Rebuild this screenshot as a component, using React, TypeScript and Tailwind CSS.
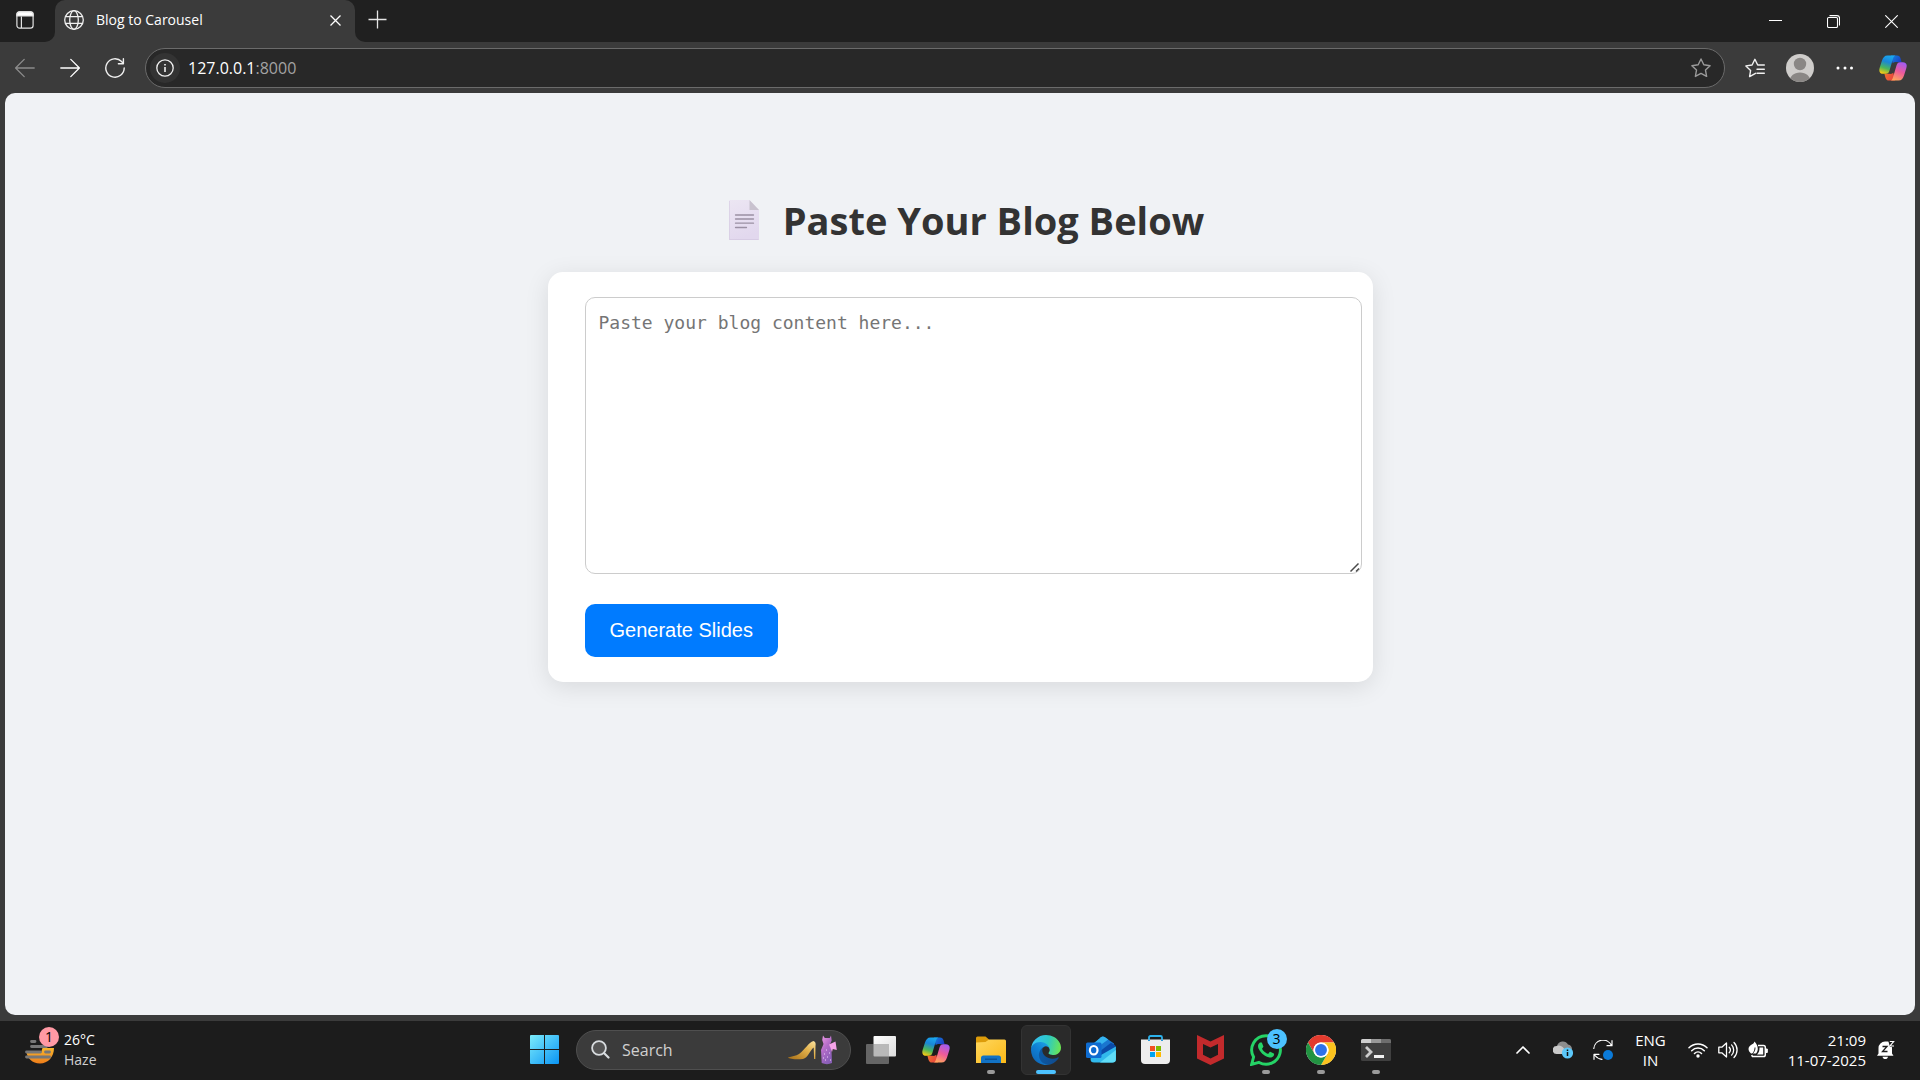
import React, { useState } from 'react';

const uiFont = "font-['Open_Sans','Noto_Sans',sans-serif]";

type IconProps = { className?: string };

/* ---------- Browser icons ---------- */

const TabActionsIcon = ({ className }: IconProps) => (
  <svg viewBox="0 0 20 20" className={className} fill="none" stroke="#e6e6e6" strokeWidth="1.3">
    <rect x="1" y="1" width="18" height="18" rx="3" />
    <path d="M1 5.500V4c0-1.700 1.300-3 3-3h12c1.700 0 3 1.300 3 3v1.500z" fill="#fff" />
    <path d="M6 6v13" />
  </svg>
);

const GlobeIcon = ({ className }: IconProps) => (
  <svg viewBox="0 0 20 20" className={className} fill="none" stroke="#f0f0f0" strokeWidth="1.3">
    <circle cx="10" cy="10" r="9.3" />
    <ellipse cx="10" cy="10" rx="4.3" ry="9.3" />
    <path d="M1.5 6.6h17M1.5 13.4h17" />
  </svg>
);

const ArrowIcon = ({ className }: IconProps) => (
  <svg viewBox="0 0 20 20" className={className} fill="none" stroke="currentColor" strokeWidth="1.3" strokeLinecap="round" strokeLinejoin="round">
    <path d="M.8 10h18.600M10.800 1.400l8.600 8.600-8.600 8.600" />
  </svg>
);

const ReloadIcon = ({ className }: IconProps) => (
  <svg viewBox="0 0 20 20" className={className} fill="none" stroke="#f0f0f0" strokeWidth="1.4" strokeLinecap="round" strokeLinejoin="round">
    <path d="M19.2 10A9.2 9.2 0 1 1 16.6 3.6L18.2 5.4M18.4.8v5h-5" />
  </svg>
);

const StarIcon = ({ className }: IconProps) => (
  <svg viewBox="0 0 20 20" className={className} fill="none" stroke="#9a9a9a" strokeWidth="1.4" strokeLinejoin="round">
    <path d="M10 1l2.8 5.8 6.3.9-4.6 4.4 1.1 6.3L10 15.4l-5.6 3 1.1-6.3L.9 7.700l6.300-.9z" />
  </svg>
);

const FavoritesIcon = ({ className }: IconProps) => (
  <svg viewBox="0 0 20 20" className={className} fill="none" stroke="#f0f0f0" strokeWidth="1.4" strokeLinecap="round" strokeLinejoin="round">
    <path d="M10.500 15.300L4.600 18.600l1-6.200L.9 7.900l6.200-.9L9.900 1.300 12.700 7h6.600M12 11.300h7.300M12 15.300h7.300" />
  </svg>
);

const ProfileIcon = ({ className }: IconProps) => (
  <svg viewBox="0 0 28 28" className={className}>
    <defs>
      <clipPath id="avatar">
        <circle cx="14" cy="14" r="14" />
      </clipPath>
    </defs>
    <g clipPath="url(#avatar)">
      <rect width="28" height="28" fill="#cfcdcb" />
      <circle cx="14" cy="10" r="6.200" fill="#8a8785" />
      <path d="M3.500 28c0-6 4.500-9.600 10.500-9.600S24.500 22 24.500 28z" fill="#8a8785" />
    </g>
  </svg>
);

const CopilotIcon = ({ className, id }: IconProps & { id: string }) => (
  <svg viewBox="0 0 28 26" className={className}>
    <defs>
      <linearGradient id={`${id}-l`} x1="0.6" y1="0" x2="0.3" y2="1">
        <stop offset="0" stopColor="#1aa7ee" />
        <stop offset="0.35" stopColor="#1a86d8" />
        <stop offset="0.7" stopColor="#4cb75a" />
        <stop offset="1" stopColor="#f6c915" />
      </linearGradient>
      <linearGradient id={`${id}-r`} x1="0.7" y1="0" x2="0.3" y2="1">
        <stop offset="0" stopColor="#a25bf2" />
        <stop offset="0.5" stopColor="#ee5a9a" />
        <stop offset="1" stopColor="#ffa65c" />
      </linearGradient>
      <linearGradient id={`${id}-t`} x1="0" y1="0" x2="1" y2="0.6">
        <stop offset="0" stopColor="#1488e0" />
        <stop offset="1" stopColor="#1b3fc4" />
      </linearGradient>
      <linearGradient id={`${id}-b`} x1="0" y1="0" x2="1" y2="0.3">
        <stop offset="0" stopColor="#f0722c" />
        <stop offset="1" stopColor="#e8443f" />
      </linearGradient>
    </defs>
    <path d="M12 .5h6c2 0 3 1.200 3.600 3.100l1 3.600h-3.400c-2.500 0-3.500-.5-5.500 1z" fill={`url(#${id}-t)`} />
    <path d="M16 25.500h-6c-2 0-3-1.200-3.600-3.100l-1-3.600h3.400c2.500 0 3.500.5 5.500-1z" fill={`url(#${id}-b)`} />
    <path d="M16.500.5h-8C5.500.5 4 2.600 3 5.600L.7 12.800c-1.200 3.700.3 6 3.600 6h2.400c2.200 0 3.200-1.200 3.800-3.300L13.800 4.300C14.400 2 15.200.8 16.500.5z" fill={`url(#${id}-l)`} />
    <path d="M11.500 25.500h8c3 0 4.500-2.100 5.500-5.100l2.300-7.200c1.200-3.700-.3-6-3.600-6h-2.400c-2.200 0-3.200 1.200-3.800 3.300L14.200 21.700c-.6 2.300-1.400 3.500-2.700 3.800z" fill={`url(#${id}-r)`} />
  </svg>
);

/* ---------- Page icon ---------- */

const PageEmoji = ({ className }: IconProps) => (
  <svg viewBox="0 0 30 40" className={className}>
    <defs>
      <linearGradient id="sheet" x1="0" y1="0" x2="0.3" y2="1">
        <stop offset="0" stopColor="#ece6f3" />
        <stop offset="1" stopColor="#e2d8ee" />
      </linearGradient>
    </defs>
    <path d="M1 0h19.500L30 10v29a1 1 0 0 1-1 1H1a1 1 0 0 1-1-1V1a1 1 0 0 1 1-1z" fill="url(#sheet)" />
    <path d="M.3 1v38.500h29.400" fill="none" stroke="#d3c7e0" strokeWidth="0.7" />
    <path d="M20.500 0L30 10h-9.500z" fill="#c8c2ce" />
    <path d="M6.500 15h18M6.500 19h18M6.500 23.200h18M6.500 27.500h11" stroke="#9a90a3" strokeWidth="1.300" strokeLinecap="round" />
  </svg>
);

/* ---------- Taskbar icons ---------- */

const WeatherIcon = ({ className }: IconProps) => (
  <svg viewBox="0 0 30 25" className={className}>
    <defs>
      <linearGradient id="sun" x1="0" y1="0" x2="0" y2="1">
        <stop offset="0" stopColor="#f8b62d" />
        <stop offset="1" stopColor="#ee7d1a" />
      </linearGradient>
    </defs>
    <path d="M1.500 13.500H16L17.500 9H29c0 9-6 15.500-14 15.500S2.500 19 1.500 13.500z" fill="url(#sun)" />
    <path d="M6.500 2.500h3.500M6.500 7.500h15M1.500 13h14M20.500 13h4M1.500 18h23" stroke="#777" strokeWidth="2.800" strokeLinecap="round" />
  </svg>
);

const StartIcon = ({ className }: IconProps) => (
  <svg viewBox="0 0 29 29" className={className}>
    <defs>
      <linearGradient id="win" gradientUnits="userSpaceOnUse" x1="0" y1="0" x2="29" y2="29">
        <stop offset="0" stopColor="#7cecfb" />
        <stop offset="1" stopColor="#0a94f4" />
      </linearGradient>
    </defs>
    <path d="M0 1a1 1 0 0 1 1-1h13v14H0zM15 0h13a1 1 0 0 1 1 1v13H15zM0 15h14v14H1a1 1 0 0 1-1-1zM15 15h14v13a1 1 0 0 1-1 1H15z" fill="url(#win)" />
  </svg>
);

const SearchIcon = ({ className }: IconProps) => (
  <svg viewBox="0 0 19 19" className={className} fill="none" stroke="#d8dcdf" strokeLinecap="round">
    <circle cx="8" cy="8" r="6.900" strokeWidth="1.800" fill="#555" />
    <path d="M13.200 13.200l4.300 4.300" strokeWidth="2.200" />
  </svg>
);

const ShoesAndDressArt = ({ className }: IconProps) => (
  <svg viewBox="0 0 50 30" className={className}>
    <defs>
      <linearGradient id="heel" x1="0" y1="1" x2="1" y2="0">
        <stop offset="0" stopColor="#a86f16" />
        <stop offset="0.6" stopColor="#e3b24c" />
        <stop offset="1" stopColor="#fae3a0" />
      </linearGradient>
      <linearGradient id="dress" x1="0" y1="0" x2="0.5" y2="1">
        <stop offset="0" stopColor="#ef9be4" />
        <stop offset="0.5" stopColor="#b36cc8" />
        <stop offset="1" stopColor="#8a5fb8" />
      </linearGradient>
    </defs>
    <path d="M0 22.500c4-1.500 8-1.300 11-3.500C17 14.500 20.500 7.500 25.500 6c2 .7 2.500 2.500 2 5l-.2 13h-1.200l-.4-11.500c-4 3-5.700 10.500-10.700 11.500-5 .7-14 .2-15-1.500z" fill="url(#heel)" />
    <path d="M35 .5l1.800 2.500h5L43 .5l.7 5-1.700 4 1.500 5.500.5 13c-3 1.500-7 1.500-10.300 0L33 15l2.500-6-1.300-4z" fill="url(#dress)" />
    <path d="M36 19h1M39 22h1M37 25h1M41 18h1M42 25h1M38 15h1M35 23h1" stroke="#f1d5fa" strokeWidth="1" />
    <path d="M41 9.500l6.500-3 1.300 8.500-4-1-.8 3-1.500-4z" fill="#f6a3e8" />
  </svg>
);

const TaskViewIcon = ({ className }: IconProps) => (
  <svg viewBox="0 0 30 28" className={className}>
    <defs>
      <linearGradient id="pane" x1="0" y1="0" x2="1" y2="1">
        <stop offset="0" stopColor="#fff" />
        <stop offset="1" stopColor="#dcdcdc" />
      </linearGradient>
    </defs>
    <rect x="7.500" y="0" width="22.500" height="20.500" rx="1" fill="url(#pane)" />
    <rect x="0" y="8" width="23" height="20" rx="1" fill="#656565" />
    <path d="M7.500 8H23v12.500H8.500a1 1 0 0 1-1-1z" fill="#b9b9b9" />
  </svg>
);

const FolderIcon = ({ className }: IconProps) => (
  <svg viewBox="0 0 30 27" className={className}>
    <defs>
      <linearGradient id="folder" x1="0" y1="0" x2="1" y2="1">
        <stop offset="0" stopColor="#ffd75e" />
        <stop offset="1" stopColor="#fbb917" />
      </linearGradient>
    </defs>
    <path d="M0 2a1.500 1.500 0 0 1 1.500-1.500h8L13 3.500V9H0z" fill="#dd9c0a" />
    <path d="M0 6.500L9.500 6l3.500-2.500h15.500A1.500 1.500 0 0 1 30 5v22H0z" fill="url(#folder)" />
    <path d="M5 27v-5a2.500 2.500 0 0 1 2.500-2.500h15A2.500 2.500 0 0 1 25 22v5z" fill="#1272c4" />
    <path d="M9 23.200h12" stroke="#0b4b8e" strokeWidth="1.200" />
  </svg>
);

const EdgeIcon = ({ className }: IconProps) => (
  <svg viewBox="0 0 256 256" className={className}>
    <defs>
      <linearGradient id="edge-a" gradientUnits="userSpaceOnUse" x1="63" y1="178" x2="241" y2="178">
        <stop offset="0" stopColor="#0c59a4" />
        <stop offset="1" stopColor="#114a8b" />
      </linearGradient>
      <linearGradient id="edge-b" gradientUnits="userSpaceOnUse" x1="157" y1="100" x2="46" y2="222">
        <stop offset="0" stopColor="#1b9de2" />
        <stop offset="0.5" stopColor="#0f7fd4" />
        <stop offset="1" stopColor="#0f6cbd" />
      </linearGradient>
      <linearGradient id="edge-c" gradientUnits="userSpaceOnUse" x1="20" y1="70" x2="250" y2="120">
        <stop offset="0" stopColor="#35c1f1" />
        <stop offset="0.5" stopColor="#2cc9c6" />
        <stop offset="1" stopColor="#6be553" />
      </linearGradient>
    </defs>
    <path d="M231 190.500c-3.400 1.800-6.900 3.400-10.500 4.700a101.900 101.900 0 0 1-35.900 6.500c-47.300 0-88.500-32.500-88.500-74.300a31.500 31.500 0 0 1 16.400-27.300c-42.800 1.800-53.800 46.400-53.800 72.500 0 73.900 68.100 81.400 82.800 81.400 7.900 0 19.800-2.300 27-4.600l1.300-.4a128.300 128.300 0 0 0 66.600-52.800 4 4 0 0 0-5.400-5.700z" fill="url(#edge-a)" />
    <path d="M105.700 241.400A79.200 79.200 0 0 1 83 220.100a80.700 80.700 0 0 1 29.500-120c3.200-1.500 8.500-4.100 15.600-4a32.400 32.400 0 0 1 25.700 13 31.900 31.900 0 0 1 6.300 18.700c0-.2 24.500-79.600-80-79.600C36.200 48.200 0 89.900 0 126.400a130.300 130.300 0 0 0 12.100 56.100 128 128 0 0 0 156.400 67.100 75.500 75.500 0 0 1-62.800-8.200z" fill="url(#edge-b)" />
    <path d="M152.300 148.900c-.8 1-3.300 2.500-3.300 5.700 0 2.600 1.700 5.200 4.700 7.300 14.400 10 41.500 8.700 41.600 8.700a59.600 59.600 0 0 0 30.300-8.300 61.400 61.400 0 0 0 30.400-52.900c.3-22.400-8-37.300-11.300-43.900C223.500 23.900 177.700 0 128 0A128 128 0 0 0 0 126.200c.5-36.500 36.800-66 80-66 3.500 0 23.500.3 42 10a72.600 72.600 0 0 1 30.900 29.300c6.100 10.600 7.200 24.100 7.200 29.500s-2.700 13.300-7.800 19.900z" fill="url(#edge-c)" />
  </svg>
);

const OutlookIcon = ({ className }: IconProps) => (
  <svg viewBox="0 0 30 27" className={className}>
    <path d="M4.500 10L15 1.200a3 3 0 0 1 3.600-.2L28 7.500V20L12 21z" fill="#1a76cf" />
    <path d="M7 8l8-6.800a3 3 0 0 1 3.600-.2l3.600 2.600-11 8z" fill="#35b4ef" />
    <path d="M11 17.500l14-10.700 3.200 1.700c1 .6 1.600 1.500 1.700 3L16 20z" fill="#0b4ba8" />
    <path d="M5 20l10-1 14.900-8.500V23a3.500 3.500 0 0 1-3.500 3.500H8A3.500 3.500 0 0 1 4.500 23z" fill="#31b9ec" />
    <path d="M14 26.500L29.900 14V23a3.500 3.500 0 0 1-3.500 3.500z" fill="#5fdcf7" />
    <rect x="0" y="6.500" width="15.500" height="15.500" rx="1.500" fill="#0f6cd0" />
    <ellipse cx="7.700" cy="14.200" rx="3.800" ry="4.200" fill="none" stroke="#fff" strokeWidth="2.200" />
  </svg>
);

const StoreIcon = ({ className }: IconProps) => (
  <svg viewBox="0 0 29 29" className={className}>
    <path d="M8 6.500V2.500A1.500 1.500 0 0 1 9.500 1h10A1.500 1.500 0 0 1 21 2.500v4" fill="none" stroke="#2cb2ec" strokeWidth="1.800" />
    <path d="M0 4.500h29V25a4 4 0 0 1-4 4H4a4 4 0 0 1-4-4z" fill="#ededed" />
    <path d="M8 6V4.500M21 6V4.500" stroke="#1690d6" strokeWidth="1.800" />
    <path d="M9 11h5v5H9z" fill="#f25022" />
    <path d="M15 11h5v5h-5z" fill="#7fba00" />
    <path d="M9 17h5v5H9z" fill="#00a4ef" />
    <path d="M15 17h5v5h-5z" fill="#ffb900" />
  </svg>
);

const McAfeeIcon = ({ className }: IconProps) => (
  <svg viewBox="0 0 27 30" className={className}>
    <path d="M0 0l13.500 6.500L27 0v23.500L13.500 30 0 23.500zM6 9v10.800l7.500 3.600 7.500-3.600V9l-7.500 3.500z" fill="#c22a2c" fillRule="evenodd" />
  </svg>
);

const WhatsAppIcon = ({ className }: IconProps) => (
  <svg viewBox="0 0 24 24" className={className} fill="#25d366">
    <path d="M17.472 14.382c-.297-.149-1.758-.867-2.030-.967-.273-.099-.471-.148-.670.150-.197.297-.767.966-.940 1.164-.173.199-.347.223-.644.075-.297-.150-1.255-.463-2.390-1.475-.883-.788-1.480-1.761-1.653-2.059-.173-.297-.018-.458.130-.606.134-.133.298-.347.446-.520.149-.174.198-.298.298-.497.099-.198.050-.371-.025-.520-.075-.149-.669-1.612-.916-2.207-.242-.579-.487-.500-.669-.510-.173-.008-.371-.010-.570-.010-.198 0-.520.074-.792.372-.272.297-1.040 1.016-1.040 2.479 0 1.462 1.065 2.875 1.213 3.074.149.198 2.096 3.200 5.077 4.487.709.306 1.262.489 1.694.625.712.227 1.360.195 1.871.118.571-.085 1.758-.719 2.006-1.413.248-.694.248-1.289.173-1.413-.074-.124-.272-.198-.570-.347" />
    <path d="M12 1.300A10.700 10.700 0 0 0 2.700 17.300L1.200 22.800l5.600-1.500A10.700 10.700 0 1 0 12 1.300z" fill="none" stroke="#25d366" strokeWidth="2.200" />
  </svg>
);

const ChromeIcon = ({ className }: IconProps) => (
  <svg viewBox="0 0 48 48" className={className}>
    <circle cx="24" cy="24" r="24" fill="#fff" />
    <path d="M3.200 12a24 24 0 0 1 41.600 0H24a12 12 0 0 0-10.400 18z" fill="#e33b2e" />
    <path d="M44.800 12A24 24 0 0 1 24 48l10.400-18A12 12 0 0 0 24 12z" fill="#fcc31e" />
    <path d="M24 48A24 24 0 0 1 3.200 12l10.400 18a12 12 0 0 0 20.800 0z" fill="#229342" />
    <circle cx="24" cy="24" r="12" fill="#fff" />
    <circle cx="24" cy="24" r="9.500" fill="#2f72ea" />
  </svg>
);

const TerminalIcon = ({ className }: IconProps) => (
  <svg viewBox="0 0 30 22" className={className}>
    <rect width="30" height="22" rx="1.500" fill="#404040" />
    <path d="M0 4V1.500A1.500 1.500 0 0 1 1.500 0H10v4z" fill="#cfcfcf" />
    <path d="M10 0h10v4H10z" fill="#999" />
    <path d="M20 0h8.500A1.500 1.500 0 0 1 30 1.500V4H20z" fill="#6e6e6e" />
    <path d="M5 8l5 5-5 5" fill="none" stroke="#ccc" strokeWidth="2.800" />
    <path d="M13 17.500h10" stroke="#f2f2f2" strokeWidth="3" />
  </svg>
);

const CloudIcon = ({ className }: IconProps) => (
  <svg viewBox="0 0 20 18" className={className}>
    <path d="M4 5a6 6 0 0 1 11-1.500A5 5 0 0 1 19 8l-4 5z" fill="#8d8d8d" />
    <path d="M4 13a4 4 0 0 1-.5-8C6 3.500 9 5 10.500 7L15 13z" fill="#c9c9c9" />
    <circle cx="14.500" cy="12" r="5.600" fill="#5cc8fa" />
    <path d="M14.500 11v4M14.500 8.600v1.300" stroke="#111" strokeWidth="1.500" />
  </svg>
);

const SyncIcon = ({ className }: IconProps) => (
  <svg viewBox="0 0 20 20" className={className} fill="none" stroke="#fff" strokeWidth="1.200" strokeLinecap="round" strokeLinejoin="round">
    <path d="M.8 8.500A9.300 9.300 0 0 1 18.500 5.500M19 .7v5h-5M1 19.300v-5h5M2 15.500c2 2.500 4 3.600 7 3.800" />
    <circle cx="15" cy="15" r="5" fill="#0b7ad8" stroke="none" />
  </svg>
);

const WifiIcon = ({ className }: IconProps) => (
  <svg viewBox="0 0 20 16" className={className} fill="none" stroke="#fff" strokeWidth="1.500" strokeLinecap="round">
    <path d="M1 5.800a12.600 12.600 0 0 1 18 0M3.700 8.700a8.800 8.800 0 0 1 12.600 0M6.500 11.500a5 5 0 0 1 7 0" />
    <circle cx="10" cy="14" r="1.700" fill="#fff" stroke="none" />
  </svg>
);

const SpeakerIcon = ({ className }: IconProps) => (
  <svg viewBox="0 0 20 18" className={className} fill="none" stroke="#fff" strokeWidth="1.300" strokeLinecap="round" strokeLinejoin="round">
    <path d="M.8 6.200h3L8.500 2v14l-4.700-4.200h-3zM11.200 6.300a4 4 0 0 1 0 5.400M13.600 3.900a7.300 7.300 0 0 1 0 10.200M16 1.500a10.700 10.700 0 0 1 0 15" />
  </svg>
);

const BatteryIcon = ({ className }: IconProps) => (
  <svg viewBox="0 0 20 18" className={className}>
    <path d="M10 4.500h5.500a1.800 1.800 0 0 1 1.800 1.800v7.400a1.800 1.800 0 0 1-1.800 1.800H4.500l-1-1.500" fill="none" stroke="#fff" strokeWidth="1.500" />
    <path d="M18 8h1.300v3.500H18z" fill="#fff" stroke="#fff" />
    <path d="M11.500 6.500h3.700v7H9c2-2 2.600-4 2.500-7z" fill="#fff" />
    <path d="M6.500.5c3.500 3.500 4.500 8.500 1.500 12H3C-1 9 .5 5.500 3 4c1.500-1 3-1.500 3.500-3.500z" fill="#fff" />
    <path d="M7 6.500c0 4-2 6-6 9.500" fill="none" stroke="#1c1c1c" strokeWidth="1" />
  </svg>
);

const BellIcon = ({ className }: IconProps) => (
  <svg viewBox="0 0 18 20" className={className}>
    <path d="M1.500 13.500V8A6.500 6.500 0 0 1 8 1.500h4l3 6v6l1.500 2.300H0zM5.500 16.800h5.500c-.3 1.500-1.300 2.300-2.700 2.300s-2.500-.8-2.800-2.300z" fill="#fff" />
    <path d="M5.500 6.500h4.500L5.500 11.500h5" fill="none" stroke="#1c1c1c" strokeWidth="1.300" />
    <path d="M11 0h7v7h-5z" fill="#1c1c1c" />
    <path d="M12.800 1.500h3.800L13 6h4" fill="none" stroke="#fff" strokeWidth="1.200" />
  </svg>
);

/* ---------- Layout ---------- */

const TabStrip = () => (
  <div className="flex h-[42px] text-[14px] text-white">
    <div className="flex w-[55px] items-center rounded-br-[10px] bg-[#202020] pb-[2px] pl-4">
      <button type="button" aria-label="Tab actions">
        <TabActionsIcon className="size-[18px]" />
      </button>
    </div>
    <div className="w-[300px] bg-[#202020]">
      <div className="flex h-full items-center rounded-t-[10px] bg-[#3b3b3b] pr-[14px] pb-[2px] pl-[9px]">
        <GlobeIcon className="mr-3 size-5" />
        <span className="flex-1 pb-[2px]">Blog to Carousel</span>
        <button type="button" aria-label="Close tab">
          <svg viewBox="0 0 11 11" className="size-[11px]" stroke="#fff" strokeWidth="1.300">
            <path d="M.5.5l10 10M10.500.5l-10 10" />
          </svg>
        </button>
      </div>
    </div>
    <div className="flex flex-1 items-center justify-between rounded-bl-[10px] bg-[#202020] pl-[13px]">
      <button type="button" aria-label="New tab" className="pb-1">
        <svg viewBox="0 0 19 19" className="size-[19px]" stroke="#e6e6e6" strokeWidth="1.300">
          <path d="M9.500.5v18M.5 9.500h18" />
        </svg>
      </button>
      <div className="flex h-full">
        <button type="button" aria-label="Minimize" className="flex w-[58px] items-center justify-center">
          <svg viewBox="0 0 13 13" className="size-[13px]" stroke="#fff" strokeWidth="1">
            <path d="M0 5.500h13" />
          </svg>
        </button>
        <button type="button" aria-label="Restore" className="flex w-[58px] items-center justify-center">
          <svg viewBox="0 0 13 13" className="size-[13px]" fill="none" stroke="#fff" strokeWidth="1.100">
            <rect x=".5" y="2.500" width="10" height="10" rx="1.200" />
            <path d="M2.500.600h7.500a2.500 2.500 0 0 1 2.500 2.500v7.400" />
          </svg>
        </button>
        <button type="button" aria-label="Close" className="flex w-[58px] items-center justify-center">
          <svg viewBox="0 0 13 13" className="size-[13px]" stroke="#fff" strokeWidth="1.100">
            <path d="M.3.300l12.400 12.400M12.700.300L.3 12.700" />
          </svg>
        </button>
      </div>
    </div>
  </div>
);

const Toolbar = () => (
  <div className="flex h-[51px] items-center pr-[13px] pl-[15px]">
    <div className="mr-5 flex gap-[25px]">
      <button type="button" aria-label="Back" disabled>
        <ArrowIcon className="size-5 rotate-180 text-[#8c8c8c]" />
      </button>
      <button type="button" aria-label="Forward">
        <ArrowIcon className="size-5 text-white" />
      </button>
      <button type="button" aria-label="Reload">
        <ReloadIcon className="size-5" />
      </button>
    </div>
    <div className="flex h-10 flex-1 items-center rounded-full border border-[#6b6b6b] bg-[#282828] pr-[13px] pl-1">
      <button type="button" aria-label="Site information" className="flex size-[30px] items-center justify-center rounded-full bg-[#333333]">
        <svg viewBox="0 0 18 18" className="size-[18px]" fill="none" stroke="#f0f0f0" strokeWidth="1.300">
          <circle cx="9" cy="9" r="8.200" />
          <path d="M9 8v5M9 5v1.500" strokeWidth="1.600" />
        </svg>
      </button>
      <span className="ml-2 flex-1 text-[16px] text-white">
        127.0.0.1<span className="text-[#a3a3a3]">:8000</span>
      </span>
      <button type="button" aria-label="Add to favorites">
        <StarIcon className="size-5" />
      </button>
    </div>
    <div className="ml-5 flex items-center">
      <button type="button" aria-label="Favorites">
        <FavoritesIcon className="size-5" />
      </button>
      <button type="button" aria-label="Profile" className="ml-[21px]">
        <ProfileIcon className="size-7" />
      </button>
      <button type="button" aria-label="Settings and more" className="ml-[22px]">
        <svg viewBox="0 0 18 4" className="h-1 w-[18px]" fill="#fff">
          <circle cx="2" cy="2" r="1.500" />
          <circle cx="9" cy="2" r="1.500" />
          <circle cx="15.500" cy="2" r="1.500" />
        </svg>
      </button>
      <button type="button" aria-label="Copilot" className="ml-[25px]">
        <CopilotIcon id="toolbar-copilot" className="h-[26px] w-7" />
      </button>
    </div>
  </div>
);

const BlogForm = () => {
  const [blog, setBlog] = useState('');

  return (
    <main className="mx-[5px] flex-1 rounded-[10px] bg-[#f0f2f5] pt-[99px]">
      <h1 className="mb-6 flex items-center justify-center gap-6 pl-[13px] text-[38px] leading-[56px] font-bold text-[#333333]">
        <PageEmoji className="h-10 w-[30px]" />
        Paste Your Blog Below
      </h1>
      <form
        onSubmit={(e) => e.preventDefault()}
        className="mx-auto max-w-[825px] rounded-[15px] bg-white px-[37px] py-[25px] shadow-[0_5px_25px_rgba(0,0,0,0.1)]"
      >
        <div className="relative w-[calc(100%+26px)]">
          <textarea
            aria-label="Blog content"
            placeholder="Paste your blog content here..."
            value={blog}
            onChange={(e) => setBlog(e.target.value)}
            className="block h-[277px] w-full resize-y rounded-[10px] border border-[#cccccc] p-[13px] font-['DejaVu_Sans_Mono',monospace] text-[18px] leading-6 placeholder:text-[#757575] [&::-webkit-resizer]:bg-transparent"
          />
          {/* resize grip */}
          <svg
            viewBox="0 0 12 12"
            className="pointer-events-none absolute right-[1px] bottom-[1px] size-3"
            fill="none"
            stroke="#4a4a4a"
            strokeWidth="1.500"
          >
            <path d="M1.500 10.500l8-8M7 10.500l3-3" />
          </svg>
        </div>
        <button
          type="submit"
          className="mt-[30px] block rounded-[10px] bg-[#007bff] px-[25px] py-[15px] font-['Liberation_Sans',Arial,sans-serif] text-[20px] leading-[23px] text-white"
        >
          Generate Slides
        </button>
      </form>
    </main>
  );
};

type App = {
  name: string;
  icon: React.ReactNode;
  running?: boolean;
  active?: boolean;
  badge?: string;
};

const apps: App[] = [
  { name: 'Task view', icon: <TaskViewIcon className="h-7 w-[30px]" /> },
  { name: 'Copilot', icon: <CopilotIcon id="taskbar-copilot" className="h-[26px] w-7" /> },
  { name: 'File Explorer', icon: <FolderIcon className="h-[27px] w-[30px]" />, running: true },
  { name: 'Microsoft Edge', icon: <EdgeIcon className="size-[30px]" />, active: true },
  { name: 'Outlook', icon: <OutlookIcon className="h-[27px] w-[30px]" /> },
  { name: 'Microsoft Store', icon: <StoreIcon className="size-[29px]" /> },
  { name: 'McAfee', icon: <McAfeeIcon className="h-[30px] w-[27px]" /> },
  { name: 'WhatsApp', icon: <WhatsAppIcon className="size-8" />, running: true, badge: '3' },
  { name: 'Google Chrome', icon: <ChromeIcon className="size-[30px]" />, running: true },
  { name: 'Terminal', icon: <TerminalIcon className="h-[22px] w-[30px]" />, running: true }
];

const Taskbar = () => (
  <footer className="grid h-[59px] grid-cols-[1fr_auto_1fr] items-center bg-[#1c1c1c] pb-[2px] text-[14px] leading-5 text-white">
    <div className="flex items-center pl-[25px]">
      <div className="relative mr-[9px] pt-1">
        <WeatherIcon className="h-[25px] w-[30px]" />
        <span className="absolute -top-2 -right-1 flex size-5 items-center justify-center rounded-full bg-[#ff99a4] text-black">
          1
        </span>
      </div>
      <div>
        <p>26°C</p>
        <p className="text-[#cfcfcf]">Haze</p>
      </div>
    </div>

    <div className="flex items-center">
      <button type="button" aria-label="Start" className="flex w-[55px] justify-center">
        <StartIcon className="size-[29px]" />
      </button>
      <label className="mr-[2px] ml-1 flex h-10 w-[275px] items-center rounded-full border border-[#4f4f4f] bg-[#3b3b3b] pr-3 pl-[14px]">
        <SearchIcon className="mr-3 size-[19px] shrink-0" />
        <input
          type="text"
          aria-label="Search"
          placeholder="Search"
          className="w-0 flex-1 text-[16px] outline-none placeholder:text-[#d0d0d0]"
        />
        <ShoesAndDressArt className="h-[30px] w-[50px] shrink-0" />
      </label>
      {apps.map((app) => (
        <button key={app.name} type="button" aria-label={app.name} className="flex w-[55px] justify-center">
          <span
            className={
              app.active
                ? 'relative flex size-[50px] items-center justify-center rounded-md border border-[#333333] bg-[#2a2a2a]'
                : 'relative flex size-[50px] items-center justify-center'
            }
          >
            {app.icon}
            {app.badge && (
              <span className="absolute top-1 right-1 flex size-5 items-center justify-center rounded-full bg-[#4cc2ff] text-black">
                {app.badge}
              </span>
            )}
            {app.running && <span className="absolute bottom-[1px] h-1 w-2 rounded-full bg-[#9a9a9a]" />}
            {app.active && <span className="absolute bottom-0 h-1 w-5 rounded-full bg-[#4cc2ff]" />}
          </span>
        </button>
      ))}
    </div>

    <div className="flex items-center justify-end pr-[25px] text-[15px]">
      <button type="button" aria-label="Show hidden icons">
        <svg viewBox="0 0 14 8" className="h-2 w-[14px]" fill="none" stroke="#fff" strokeWidth="1.700" strokeLinecap="round" strokeLinejoin="round">
          <path d="M1 7l6-6 6 6" />
        </svg>
      </button>
      <CloudIcon className="ml-[23px] h-[18px] w-5" />
      <SyncIcon className="ml-5 size-5" />
      <div className="mx-[22px] text-center">
        <p>ENG</p>
        <p>IN</p>
      </div>
      <div className="flex items-center gap-[10px]">
        <WifiIcon className="h-4 w-5" />
        <SpeakerIcon className="h-[18px] w-5" />
        <BatteryIcon className="h-[18px] w-5" />
      </div>
      <div className="ml-5 text-right">
        <p>21:09</p>
        <p>11-07-2025</p>
      </div>
      <BellIcon className="ml-[11px] h-5 w-[18px]" />
    </div>
  </footer>
);

export default function App() {
  return (
    <div className={`flex min-h-screen flex-col bg-[#3b3b3b] ${uiFont}`}>
      <TabStrip />
      <Toolbar />
      <BlogForm />
      <div className="h-[6px]" />
      <Taskbar />
    </div>
  );
}
